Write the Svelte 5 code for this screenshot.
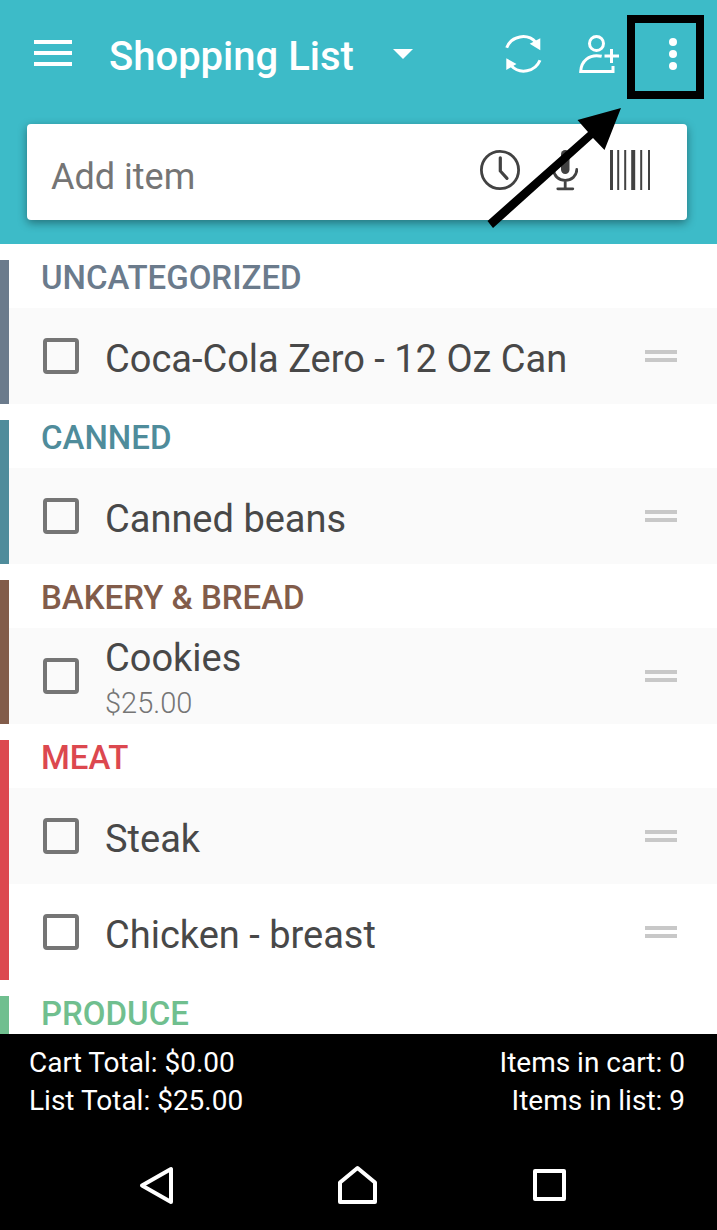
<script>
  let newItem = '';

  const categories = [
    {
      name: 'Uncategorized',
      color: '#6b7b8c',
      items: [{ id: 'cola', name: 'Coca-Cola Zero - 12 Oz Can', checked: false }]
    },
    {
      name: 'Canned',
      color: '#4f8c9b',
      items: [{ id: 'beans', name: 'Canned beans', checked: false }]
    },
    {
      name: 'Bakery & Bread',
      color: '#825c4a',
      items: [{ id: 'cookies', name: 'Cookies', price: '$25.00', checked: false }]
    },
    {
      name: 'Meat',
      color: '#dc484f',
      items: [
        { id: 'steak', name: 'Steak', checked: false },
        { id: 'chicken', name: 'Chicken - breast', checked: false }
      ]
    },
    { name: 'Produce', color: '#70bf8f', items: [] }
  ];
</script>

<div class="app">
  <header>
    <div class="toolbar">
      <button type="button" class="icon-button" aria-label="Menu">
        <svg width="38" height="38" viewBox="0 0 38 38">
          <path d="M0 7h38M0 18h38M0 29h38" stroke="#fff" stroke-width="4" />
        </svg>
      </button>
      <button type="button" class="title">
        <span>Shopping List</span>
        <svg width="20" height="10" viewBox="0 0 20 10">
          <path d="M0 0h20L10 10z" fill="#fff" />
        </svg>
      </button>
      <div class="actions">
        <button type="button" class="icon-button" aria-label="Sync">
          <svg width="40" height="40" viewBox="0 0 40 40" fill="none" stroke="#fff" stroke-width="3">
            <path d="M3.7 13.7A17.5 17.5 0 0 1 33 8.5M37 26.3A17.5 17.5 0 0 1 8 31.5" />
            <path d="M26.7 9.7L37.3 4.2V16.3zM3.3 24.3L13.5 30L3.3 36z" fill="#fff" stroke="none" />
          </svg>
        </button>
        <button type="button" class="icon-button" aria-label="Share list">
          <svg width="40" height="40" viewBox="0 0 40 40" fill="none" stroke="#fff" stroke-width="3">
            <circle cx="17.5" cy="9.5" r="7" />
            <path d="M22.7 22.3C10 19.5 2 27.5 1.7 37.500H34V32M32.500 15v14M25.500 22H40" />
          </svg>
        </button>
        <button type="button" class="icon-button more" aria-label="More options">
          <svg width="8" height="40" viewBox="0 0 8 40" fill="#fff">
            <circle cx="4" cy="8" r="4" />
            <circle cx="4" cy="20" r="4" />
            <circle cx="4" cy="32" r="4" />
          </svg>
        </button>
      </div>
    </div>

    <form class="search" on:submit|preventDefault>
      <input type="text" placeholder="Add item" aria-label="Add item" bind:value={newItem} />
      <button type="button" class="icon-button" aria-label="History">
        <svg width="42" height="42" viewBox="0 0 42 42" fill="none" stroke="#424242">
          <circle cx="22" cy="21" r="18.6" stroke-width="2.8" />
          <path d="M22.3 8.8V22L29 29.3" stroke-width="3.2" stroke-linecap="round" />
        </svg>
      </button>
      <button type="button" class="icon-button" aria-label="Voice input">
        <svg width="26" height="42" viewBox="0 0 26 42" fill="none" stroke="#424242" stroke-width="2.8" stroke-linecap="round">
          <rect x="9" y="1" width="8.5" height="24" rx="4.2" fill="#424242" stroke="none" />
          <path d="M1.6 20.500C1.6 27 7 31.3 13.2 31.3S24.8 27 24.8 20.500M13.2 31.500V39.500M5.8 39.8H20.8" />
        </svg>
      </button>
      <button type="button" class="icon-button" aria-label="Scan barcode">
        <svg width="40" height="42" viewBox="0 0 40 42" fill="#424242">
          <path d="M0 1h3v40H0zM7.2 1h2v40h-2zM14.2 1h2v40h-2zM21.2 1h4v40h-4zM30.2 1h2v40h-2zM38 1h2v40h-2z" />
        </svg>
      </button>
    </form>

    <!-- Pointer to the overflow menu -->
    <svg class="pointer" width="218" height="214" viewBox="0 0 218 214" aria-hidden="true">
      <rect x="145" y="4" width="69" height="76" fill="none" stroke="#000" stroke-width="8" />
      <path d="M135 93L91.500 105L102 117L1.500 206L7 213L107 123L118.500 135z" />
    </svg>
  </header>

  <main>
    {#each categories as category (category.name)}
      <section style="--category: {category.color}">
        <h2>{category.name}</h2>
        <ul>
          {#each category.items as item (item.id)}
            <li>
              <input type="checkbox" id={item.id} bind:checked={item.checked} />
              <label for={item.id}>
                <span class="name">{item.name}</span>
                {#if item.price}
                  <span class="price">{item.price}</span>
                {/if}
              </label>
              <button type="button" class="icon-button" aria-label="Reorder {item.name}">
                <svg width="32" height="12" viewBox="0 0 32 12">
                  <path d="M0 2h32M0 10h32" stroke="#c8c8c8" stroke-width="4" />
                </svg>
              </button>
            </li>
          {/each}
        </ul>
      </section>
    {/each}
  </main>

  <footer>
    <div class="totals">
      <div>
        <p>Cart Total: $0.00</p>
        <p>List Total: $25.00</p>
      </div>
      <div class="counts">
        <p>Items in cart: 0</p>
        <p>Items in list: 9</p>
      </div>
    </div>
    <nav>
      <button type="button" class="icon-button" aria-label="Back">
        <svg width="56" height="40" viewBox="0 0 56 40">
          <path d="M4 20.500L33 4V37z" />
        </svg>
      </button>
      <button type="button" class="icon-button" aria-label="Home">
        <svg width="40" height="40" viewBox="0 0 40 40">
          <path d="M2 37V17.500L19.500 3L37 17.500V37z" />
        </svg>
      </button>
      <button type="button" class="icon-button" aria-label="Recent apps">
        <svg width="40" height="40" viewBox="0 0 40 40">
          <path d="M5 6H34V34H5z" />
        </svg>
      </button>
    </nav>
  </footer>
</div>

<style>
  .app {
    display: flex;
    flex-direction: column;
    height: 100vh;
    background: #fff;
    font-family: Roboto, 'Liberation Sans', sans-serif;
    color: #484848;
  }

  .icon-button {
    display: flex;
    align-items: center;
    justify-content: center;
    flex-shrink: 0;
    padding: 0;
    border: none;
    background: none;
    cursor: pointer;
  }

  header {
    position: relative;
    padding: 0 30px 24px 27px;
    background: #3dbbc8;
  }

  .toolbar {
    display: flex;
    align-items: center;
    height: 108px;
    margin-bottom: 16px;
    padding-left: 7px;
  }

  .title {
    display: flex;
    align-items: center;
    gap: 39px;
    margin-left: 37px;
    padding: 0;
    border: none;
    background: none;
    color: #fff;
    font-family: inherit;
    font-size: 40px;
    font-weight: 500;
    line-height: 48px;
    white-space: nowrap;
    cursor: pointer;
  }

  .title span {
    padding-top: 6px;
  }

  .actions {
    display: flex;
    gap: 36px;
    margin-left: auto;
    padding-right: 10px;
  }

  .more {
    margin-left: 14px;
  }

  .search {
    display: flex;
    align-items: center;
    height: 96px;
    padding-right: 37px;
    border-radius: 4px;
    background: #fff;
    box-shadow: 0 3px 10px rgba(0, 0, 0, 0.4);
  }

  .search input {
    flex: 1;
    min-width: 0;
    height: 100%;
    box-sizing: border-box;
    padding: 10px 0 0 24px;
    border: none;
    outline: none;
    background: none;
    color: #484848;
    font-family: inherit;
    font-size: 36px;
  }

  .search input::placeholder {
    color: #757575;
    opacity: 1;
  }

  .search .icon-button {
    margin-left: 32px;
    padding-bottom: 4px;
  }

  .pointer {
    position: absolute;
    top: 15px;
    right: 13px;
    pointer-events: none;
  }

  main {
    flex: 1;
    min-height: 0;
    overflow: hidden;
  }

  section {
    margin-top: 16px;
    border-left: 9px solid var(--category);
  }

  h2 {
    margin: 0;
    padding: 0 32px 13px;
    color: var(--category);
    font-size: 33px;
    font-weight: 500;
    line-height: 35px;
    text-transform: uppercase;
  }

  ul {
    margin: 0;
    padding: 0;
    list-style: none;
  }

  li {
    display: flex;
    align-items: center;
    box-sizing: border-box;
    min-height: 96px;
    padding: 0 40px 0 34px;
  }

  li:nth-child(odd) {
    background: #fafafa;
  }

  li input {
    flex-shrink: 0;
    width: 36px;
    height: 36px;
    margin: 0;
    border: 4px solid #757575;
    border-radius: 4px;
    appearance: none;
  }

  li input:checked {
    background: #757575;
  }

  label {
    display: flex;
    flex: 1;
    flex-direction: column;
    margin-left: 26px;
    padding-top: 6px;
  }

  .name {
    font-size: 38px;
    line-height: 48px;
  }

  .price {
    color: #757575;
    font-size: 29px;
    font-weight: 300;
    line-height: 42px;
  }

  footer {
    background: #000;
    color: #fff;
  }

  .totals {
    display: flex;
    justify-content: space-between;
    padding: 10px 32px 20px 29px;
    font-size: 28px;
    line-height: 38px;
  }

  .totals p {
    margin: 0;
  }

  .counts {
    text-align: right;
  }

  nav {
    display: grid;
    grid-template-columns: repeat(3, 192px);
    justify-content: center;
    height: 90px;
    padding-right: 2px;
  }

  nav path {
    fill: none;
    stroke: #fff;
    stroke-width: 4;
    stroke-linejoin: round;
  }
</style>
